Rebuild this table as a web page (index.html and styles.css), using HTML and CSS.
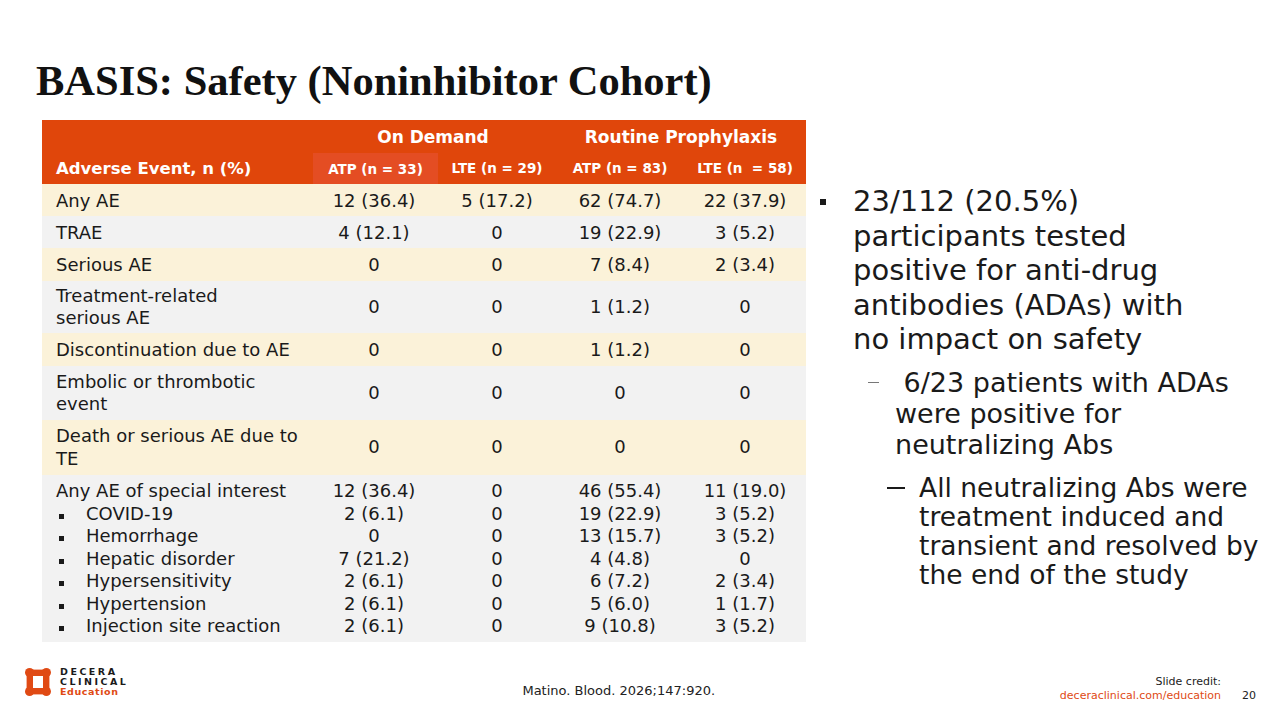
FILE: index.html
```html
<!DOCTYPE html>
<html lang="en">
<head>
<meta charset="utf-8">
<title>BASIS: Safety (Noninhibitor Cohort)</title>
<link rel="stylesheet" href="styles.css">
</head>
<body>
<div class="slide">
  <h1 class="title">BASIS: Safety (Noninhibitor Cohort)</h1>
  <div class="content">
    <table class="ae">
      <colgroup>
        <col class="c-label"><col class="c1"><col class="c2"><col class="c3"><col class="c4">
      </colgroup>
      <thead>
        <tr class="h1">
          <th></th>
          <th colspan="2">On Demand</th>
          <th colspan="2">Routine Prophylaxis</th>
        </tr>
        <tr class="h2">
          <th class="lab">Adverse Event, n (%)</th>
          <th><span class="hl">ATP (n = 33)</span></th>
          <th>LTE (n = 29)</th>
          <th>ATP (n = 83)</th>
          <th>LTE (n&nbsp; = 58)</th>
        </tr>
      </thead>
      <tbody>
        <tr class="cream r32"><td class="lab">Any AE</td><td>12 (36.4)</td><td>5 (17.2)</td><td>62 (74.7)</td><td>22 (37.9)</td></tr>
        <tr class="gray r32"><td class="lab">TRAE</td><td>4 (12.1)</td><td>0</td><td>19 (22.9)</td><td>3 (5.2)</td></tr>
        <tr class="cream r33"><td class="lab">Serious AE</td><td>0</td><td>0</td><td>7 (8.4)</td><td>2 (3.4)</td></tr>
        <tr class="gray r52"><td class="lab">Treatment-related<br>serious AE</td><td>0</td><td>0</td><td>1 (1.2)</td><td>0</td></tr>
        <tr class="cream r33"><td class="lab">Discontinuation due to AE</td><td>0</td><td>0</td><td>1 (1.2)</td><td>0</td></tr>
        <tr class="gray r54"><td class="lab">Embolic or thrombotic<br>event</td><td>0</td><td>0</td><td>0</td><td>0</td></tr>
        <tr class="cream r55"><td class="lab">Death or serious AE due to<br>TE</td><td>0</td><td>0</td><td>0</td><td>0</td></tr>
        <tr class="gray multi">
          <td class="lab">
            <div>Any AE of special interest</div>
            <div class="sub">COVID-19</div>
            <div class="sub">Hemorrhage</div>
            <div class="sub">Hepatic disorder</div>
            <div class="sub">Hypersensitivity</div>
            <div class="sub">Hypertension</div>
            <div class="sub">Injection site reaction</div>
          </td>
          <td><div>12 (36.4)</div><div>2 (6.1)</div><div>0</div><div>7 (21.2)</div><div>2 (6.1)</div><div>2 (6.1)</div><div>2 (6.1)</div></td>
          <td><div>0</div><div>0</div><div>0</div><div>0</div><div>0</div><div>0</div><div>0</div></td>
          <td><div>46 (55.4)</div><div>19 (22.9)</div><div>13 (15.7)</div><div>4 (4.8)</div><div>6 (7.2)</div><div>5 (6.0)</div><div>9 (10.8)</div></td>
          <td><div>11 (19.0)</div><div>3 (5.2)</div><div>3 (5.2)</div><div>0</div><div>2 (3.4)</div><div>1 (1.7)</div><div>3 (5.2)</div></td>
        </tr>
      </tbody>
    </table>

    <ul class="bullets">
      <li class="l1">23/112 (20.5%)<br>participants tested<br>positive for anti-drug<br>antibodies (ADAs) with<br>no impact on safety
        <ul>
          <li class="l2">&nbsp;6/23 patients with ADAs<br>were positive for<br>neutralizing Abs
            <ul>
              <li class="l3">All neutralizing Abs were<br>treatment induced and<br>transient and resolved by<br>the end of the study</li>
            </ul>
          </li>
        </ul>
      </li>
    </ul>
  </div>

  <footer class="footer">
    <div class="logo">
      <svg class="mark" width="26" height="28" viewBox="0 0 26 28" aria-hidden="true">
        <g fill="#e04a14">
          <circle cx="4.6" cy="4.6" r="4.6"/>
          <circle cx="21.4" cy="4.6" r="4.6"/>
          <circle cx="4.6" cy="23.4" r="4.6"/>
          <circle cx="21.4" cy="23.4" r="4.6"/>
          <rect x="4.6" y="1.6" width="16.8" height="6.4"/>
          <rect x="4.6" y="20" width="16.8" height="6.4"/>
          <rect x="1.6" y="4.6" width="6.4" height="18.8"/>
          <rect x="18" y="4.6" width="6.4" height="18.8"/>
        </g>
      </svg>
      <div class="wordmark">
        <span>DECERA</span>
        <span>CLINICAL</span>
        <span class="edu">Education</span>
      </div>
    </div>
    <div class="cite">Matino. Blood. 2026;147:920.</div>
    <div class="credit">
      <div>Slide credit:</div>
      <div class="link">deceraclinical.com/education</div>
    </div>
    <div class="page">20</div>
  </footer>
</div>
</body>
</html>
```

FILE: styles.css
```css
* { box-sizing: border-box; }
html, body { margin: 0; padding: 0; background: #fff; }
body { font-family: "DejaVu Sans", "Open Sans", sans-serif; color: #1a1a1a; }

.slide {
  width: 1280px;
  height: 720px;
  position: relative;
  display: flex;
  flex-direction: column;
  overflow: hidden;
}

.title {
  font-family: "Liberation Serif", "Times New Roman", serif;
  font-weight: bold;
  font-size: 42.5px;
  line-height: 46px;
  margin: 58px 0 0 36px;
  color: #111;
}

.content {
  display: flex;
  align-items: flex-start;
  margin: 16px 0 0 42px;
  flex: 1;
}

/* table */
.ae {
  border-collapse: collapse;
  table-layout: fixed;
  width: 764px;
  font-size: 18px;
  color: #1a1a1a;
}
.c-label { width: 268px; }
.c1 { width: 128px; }
.c2 { width: 118px; }
.c3 { width: 128px; }
.c4 { width: 122px; }

.ae th, .ae td { padding: 0; text-align: center; vertical-align: middle; }
.ae .lab { text-align: left; padding-left: 14px; }

.ae thead tr { background: #e0460b; color: #fff; }
.h1 th { height: 32px; font-size: 17px; font-weight: 700; padding-top: 2px; }
.h2 th { height: 32px; font-size: 13.5px; font-weight: 700; }
.h2 th.lab { font-size: 16.5px; }
.h2 .hl {
  display: flex;
  align-items: center;
  justify-content: center;
  height: 31px;
  margin: 1px 0 0 3px;
  background: #e44d23;
}

.cream { background: #fbf2d9; }
.gray { background: #f2f2f2; }
.r32 td { height: 32px; }
.r33 td { height: 33px; }
.r52 td { height: 52px; line-height: 22.5px; }
.r54 td { height: 54px; line-height: 22.5px; }
.r55 td { height: 55px; line-height: 22.5px; }

.multi td { vertical-align: top; padding-top: 5px; padding-bottom: 4px; line-height: 22.5px; height: 166px; }
.multi .sub { position: relative; padding-left: 30px; }
.multi .sub::before {
  content: "";
  position: absolute;
  left: 3px;
  top: 11px;
  width: 5px;
  height: 5px;
  background: #1a1a1a;
}

/* bullets */
.bullets {
  list-style: none;
  margin: 64px 0 0 0;
  padding: 0 0 0 47px;
  white-space: nowrap;
}
.bullets ul { list-style: none; margin: 0; padding: 0; }
.l1 {
  position: relative;
  font-size: 29px;
  line-height: 34.5px;
  color: #1a1a1a;
}
.l1::before {
  content: "";
  position: absolute;
  left: -33px;
  top: 15px;
  width: 6px;
  height: 6px;
  background: #1a1a1a;
}
.l1 > ul { margin-left: 42px; margin-top: 10px; }
.l2 { position: relative; font-size: 27px; line-height: 31px; }
.l2::before {
  content: "";
  position: absolute;
  left: -27px;
  top: 15px;
  width: 11px;
  height: 1px;
  background: #777;
}
.l2 > ul { margin-left: 24px; margin-top: 13px; }
.l3 { position: relative; font-size: 26.5px; line-height: 29px; }
.l3::before {
  content: "";
  position: absolute;
  left: -32px;
  top: 14px;
  width: 18px;
  height: 2px;
  background: #1a1a1a;
}

/* footer */
.footer {
  height: 60px;
  display: flex;
  align-items: flex-start;
  padding: 6px 0 0 25px;
  position: relative;
}
.logo { display: flex; align-items: center; gap: 9px; margin-top: 1px; }
.mark { display: block; }
.wordmark {
  display: flex;
  flex-direction: column;
  font-family: "DejaVu Sans", sans-serif;
  font-size: 9.5px;
  line-height: 10px;
  font-weight: bold;
  letter-spacing: 2.5px;
  color: #1a1a1a;
}
.wordmark .edu { color: #e04a14; letter-spacing: 0.6px; font-weight: 600; }
.cite {
  font-size: 13px;
  color: #222;
  margin: 17px 0 0 394px;
}
.credit {
  margin: 9px 0 0 auto;
  text-align: right;
  font-size: 11px;
  line-height: 14px;
  color: #222;
}
.credit .link { color: #e04a14; }
.page {
  font-size: 11px;
  color: #222;
  margin: 23px 24px 0 21px;
}
```
